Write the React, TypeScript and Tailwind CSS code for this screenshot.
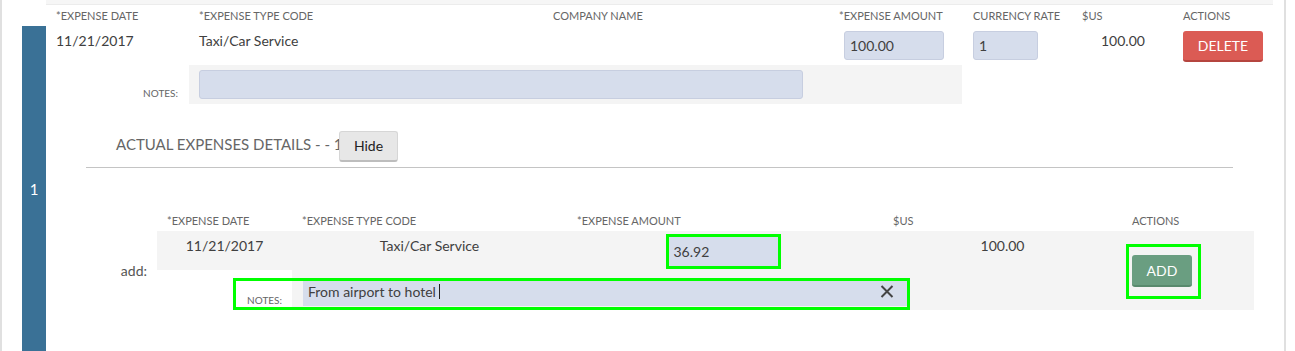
import React from "react";

function XIcon() {
  return (
    <svg width="14" height="13" viewBox="0 0 14 13" className="block">
      <path d="M1.5 1 L12.5 12 M12.5 1 L1.5 12" stroke="#444" strokeWidth="2" fill="none" />
    </svg>
  );
}

export default function App() {
  return (
    <div className="w-[1295px] h-[351px] overflow-hidden bg-white font-['Lato',sans-serif]">
      <div className="w-[1286px] h-full border-l-2 border-r-2 border-[#e0e0e0]">
        <div className="ml-[44px] w-[1227px] h-[5px] bg-[#f6f6f6] border-b border-[#ececec]" />
        <div className="h-[21px] pt-[4px] pl-[54px] flex text-[11px] leading-[13px] text-[#666] whitespace-nowrap">
          <div className="w-[143px]">*EXPENSE DATE</div>
          <div className="w-[354px]">*EXPENSE TYPE CODE</div>
          <div className="w-[286px]">COMPANY NAME</div>
          <div className="w-[134px]">*EXPENSE AMOUNT</div>
          <div className="w-[109px]">CURRENCY RATE</div>
          <div className="w-[101px]">$US</div>
          <div>ACTIONS</div>
        </div>
        <div className="flex pl-[20px]">
          <div className="w-[24px] bg-[#3a7196] flex items-center justify-center text-white text-[15px]">1</div>
          <div className="flex-1 pb-[43px]">
            {/* value row */}
            <div className="flex pt-[5px] pl-[10px] h-[36px] items-start text-[14px] leading-[20px] text-[#404040] whitespace-nowrap">
              <div className="w-[143px]">11/21/2017</div>
              <div className="w-[354px]">Taxi/Car Service</div>
              <div className="w-[286px]" />
              <div className="w-[134px] pl-[5px]">
                <div className="w-[100px] h-[29px] bg-[#d6ddec] border border-[#c7cee0] rounded-[3px] pl-[5px] flex items-center">100.00</div>
              </div>
              <div className="w-[109px]">
                <div className="w-[65px] h-[29px] bg-[#d6ddec] border border-[#c7cee0] rounded-[3px] pl-[5px] flex items-center">1</div>
              </div>
              <div className="w-[101px] pl-[19px]">100.00</div>
              <div>
                <div className="w-[80px] h-[31px] bg-[#db5b54] rounded-[3px] border-b-2 border-[#b5453f] text-white text-[14px] flex items-center justify-center">DELETE</div>
              </div>
            </div>
            {/* notes row */}
            <div className="mt-[3px] flex h-[39px]">
              <div className="w-[143px] flex items-end justify-end pr-[11px] pb-[5px] text-[10px] leading-[12px] text-[#666]">NOTES:</div>
              <div className="w-[773px] bg-[#f4f4f4] pl-[10px] pt-[5px]">
                <div className="w-[604px] h-[29px] bg-[#d6ddec] border border-[#c7cee0] rounded-[3px]" />
              </div>
            </div>
            {/* title row */}
            <div className="mt-[27px] flex items-start pl-[70px] h-[31px]">
              <div className="w-[223px] mt-[4px] text-[15px] leading-[19px] text-[#666] whitespace-nowrap">ACTUAL EXPENSES DETAILS - - 1</div>
              <div className="h-[31px] w-[59px] bg-[#e7e7e7] border border-[#d6d6d6] border-b-2 border-b-[#bdbdbd] rounded-[3px] flex justify-center pt-[4px] text-[14px] leading-[20px] text-[#222]">Hide</div>
            </div>
            <div className="mt-[5px] ml-[40px] w-[1147px] h-px bg-[#c4c4c4]" />
            {/* section 2 header */}
            <div className="mt-[46px] ml-[111px] flex h-[13px] text-[11px] leading-[13px] text-[#666] whitespace-nowrap">
              <div className="w-[135px] pl-[10px]">*EXPENSE DATE</div>
              <div className="w-[275px] pl-[10px]">*EXPENSE TYPE CODE</div>
              <div className="w-[312px] pl-[10px]">*EXPENSE AMOUNT</div>
              <div className="w-[247px] pl-[14px]">$US</div>
              <div className="pl-[6px]">ACTIONS</div>
            </div>
            <div className="mt-[4px] flex">
              <div className="w-[111px] flex items-center justify-end pr-[10px] text-[14px] text-[#555]">add:</div>
              <div className="relative w-[969px]">
                <div className="flex h-[39px] bg-[#f4f4f4] text-[14px] leading-[20px] text-[#404040] whitespace-nowrap">
                  <div className="w-[135px] text-center pt-[5px]">11/21/2017</div>
                  <div className="w-[275px] text-center pt-[5px]">Taxi/Car Service</div>
                  <div className="w-[312px] flex justify-center pt-[3px]">
                    <div className="border-[3px] border-[#00ff00] h-[35px]">
                      <div className="w-[109px] h-[29px] bg-[#d6ddec] pl-[5px] flex items-center">36.92</div>
                    </div>
                  </div>
                  <div className="w-[247px] text-center pt-[5px]">100.00</div>
                </div>
                <div className="flex h-[40px]">
                  <div className="w-[135px] bg-white flex items-end justify-end pr-[10px] pb-[4px] text-[10px] leading-[12px] text-[#666]">NOTES:</div>
                  <div className="flex-1 bg-[#f4f4f4] pl-[11px] pt-[11px]">
                    <div className="w-[604px] h-[25px] bg-[#d6ddec] flex items-start pl-[5px] pt-[2px] text-[14px] leading-[17px] text-[#404040] whitespace-nowrap">
                      <span>From airport to hotel</span>
                      <span className="inline-block w-px h-[15px] bg-[#222] ml-[3px] mt-[1px]" />
                      <span className="ml-auto mr-[13px] mt-[2px]"><XIcon /></span>
                    </div>
                  </div>
                </div>
                <div className="absolute left-[76px] top-[47px] w-[677px] h-[32px] border-[3px] border-[#00ff00]" />
              </div>
              <div className="w-[128px] bg-[#f4f4f4] pt-[13px]">
                <div className="inline-block border-[3px] border-[#00ff00] pl-[3px] pr-[6px] pt-[8px] pb-[9px]">
                  <div className="w-[60px] h-[32px] bg-[#6a9e81] rounded-[3px] border-b-2 border-[#588a6d] text-white text-[14px] flex items-center justify-center">ADD</div>
                </div>
              </div>
            </div>
          </div>
        </div>
      </div>
    </div>
  );
}
